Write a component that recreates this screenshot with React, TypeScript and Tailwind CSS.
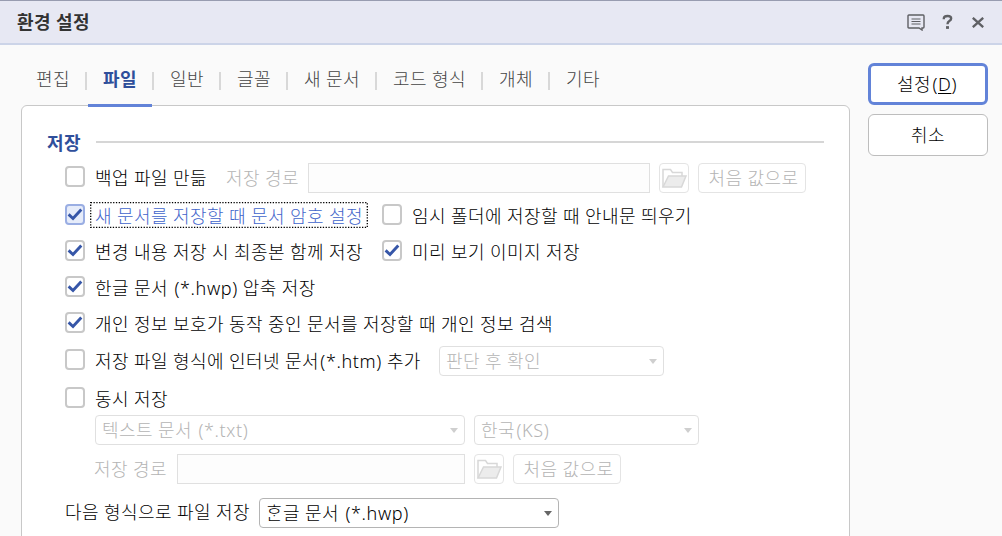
import type { ReactNode } from 'react';
import clsx from 'clsx';

const TABS = [
  { label: '편집', width: 'w-[34px]' },
  { label: '파일', width: 'w-[34px]' },
  { label: '일반', width: 'w-[34px]' },
  { label: '글꼴', width: 'w-[34px]' },
  { label: '새 문서', width: 'w-[56px]' },
  { label: '코드 형식', width: 'w-[73px]' },
  { label: '개체', width: 'w-[34px]' },
  { label: '기타', width: 'w-[34px]' },
];

const ACTIVE_TAB = '파일';

function TitleBar() {
  return (
    <header className="flex h-[45px] items-center justify-between border-t border-b-2 border-t-[#989cb0] border-b-[#ccd4e8] bg-[#e7e8f3] pr-[18px] pl-[17px]">
      <h1 className="pb-px font-bold text-[#333]">환경 설정</h1>
      <div className="flex items-center text-[#5f6064]">
        <svg width="18" height="17" viewBox="0 0 18 17" fill="none" stroke="currentColor">
          <path d="M1.9 1h14.2q.9 0 .9.9v11.2q0 .9-.9.9H15v2l-3-2H1.9q-.9 0-.9-.9V1.9q0-.9.9-.9z" strokeWidth="1.4" />
          <path d="M4.5 5h9M4.500 7.500h9M4.500 10h9" strokeWidth="1.200" />
        </svg>
        <svg className="ml-[17px]" width="11" height="16" viewBox="0 0 12 16" fill="none" stroke="currentColor">
          <path d="M2 5V4q0-2.500 4-2.500T10 4.200q0 1.500-2 2.700T6 10.500" strokeWidth="2.600" />
          <path d="M6 12.500v3" strokeWidth="3.200" />
        </svg>
        <svg className="ml-[19px]" width="12" height="11" viewBox="0 0 12 11" fill="none" stroke="currentColor">
          <path d="M.8.8l10.400 9.400M11.200.8L.8 10.200" strokeWidth="2.300" />
        </svg>
      </div>
    </header>
  );
}

function TabBar() {
  return (
    <nav className="flex h-[60px] items-center pt-[8px] pl-[15px]">
      {TABS.map((tab, i) => {
        const active = tab.label === ACTIVE_TAB;
        return (
          <div key={tab.label} className="flex h-full items-center">
            {i > 0 && <span className="mt-[4px] h-[18px] w-[2px] bg-[#d8d8d8]" />}
            <button className={clsx('relative h-full pr-[15px]', i > 0 && 'pl-[16px]', active ? 'font-bold text-[#2f4f9b]' : 'text-[#444]')}>
              <span className={clsx('block whitespace-nowrap', tab.width)}>{tab.label}</span>
              {active && <span className="absolute right-0 bottom-[-2px] left-[1px] z-10 h-[3px] bg-[#6283d8]" />}
            </button>
          </div>
        );
      })}
    </nav>
  );
}

// Latin parts in parentheses are set a little wider than the Hangul
function Ext({ children }: { children: ReactNode }) {
  return <span className="ml-[1.5px] tracking-[0.6px]">{children}</span>;
}

function Checkbox({ checked, focused, children }: { checked?: boolean; focused?: boolean; children: ReactNode }) {
  return (
    <label className="flex items-center">
      <span
        className={clsx(
          'flex h-[21px] w-5 shrink-0 items-center justify-center rounded-[4px] border-2',
          focused ? 'border-[#9aaee3] bg-[#e6ecfa]' : 'border-[#c8c8c8] bg-white',
        )}
      >
        {checked && (
          <svg className="shrink-0" width="16" height="15" viewBox="0 0 16 15" fill="none" stroke="#3656a8">
            <path d="M1.600 7.400L6 11.500L14.300 2.400" strokeWidth="2.900" />
          </svg>
        )}
      </span>
      <span
        className={clsx(
          'relative ml-[5px] h-[27px] pt-[2px] pl-[5px] leading-[26px] whitespace-nowrap',
          focused && 'w-[278px] text-[#3f65cb]',
        )}
      >
        {focused && (
          <svg className="absolute top-[1px] left-0" width="278" height="26" fill="none" stroke="#000">
            <rect x=".7" y=".7" width="276.600" height="24.600" strokeWidth="1.300" strokeDasharray="1.300 1.500" />
          </svg>
        )}
        {children}
      </span>
    </label>
  );
}

function PathField({ width }: { width: string }) {
  return (
    <>
      <div className={clsx('h-[30px] shrink-0 border border-[#e0e0e0] bg-[#fdfdfd]', width)} />
      <button className="ml-[9px] flex h-[30px] w-[30px] shrink-0 items-center justify-center rounded-[4px] border border-[#e4e4e4]">
        <svg width="26" height="22" viewBox="0 0 26 22" stroke="#d8d8d8" strokeWidth="1.500">
          <path d="M2 20V2.500h7.500l2 3H21V9" fill="#fff" />
          <path d="M2 20L7.500 9H25l-4.500 11z" fill="#ececec" />
        </svg>
      </button>
      <button className="ml-[9px] h-[30px] w-[108px] shrink-0 rounded-[4px] border border-[#e4e4e4] pl-[3px] whitespace-nowrap text-[#b4b4b4]">
        처음 값으로
      </button>
    </>
  );
}

function Select({ width, disabled, children }: { width: string; disabled?: boolean; children: ReactNode }) {
  return (
    <div
      className={clsx(
        'flex h-[30px] shrink-0 items-center justify-between rounded-[4px] border bg-white pr-[6px] pl-[6px] whitespace-nowrap',
        width,
        disabled ? 'border-[#e0e0e0] text-[#b4b4b4]' : 'border-[#b4b4b4] text-black',
      )}
    >
      <span>{children}</span>
      <svg className={disabled ? 'text-[#cfcfcf]' : 'text-[#666]'} width="8" height="5" viewBox="0 0 8 5" fill="currentColor">
        <path d="M0 0h8L4 5z" />
      </svg>
    </div>
  );
}

function SaveSettings() {
  return (
    <section className="h-[460px] w-[829px] rounded-[6px] border border-[#c8c8c8] bg-white pt-[24px] pl-[25px]">
      <div className="flex h-[26px] items-center">
        <h2 className="w-[49px] font-bold text-[#2f4f9b]">저장</h2>
        <div className="mb-[2px] h-[2px] w-[728px] bg-[#d6d6d6]" />
      </div>

      <div className="pl-[18px]">
        <div className="mt-[7px] flex h-[30px] items-center">
          <div className="pb-[3px]">
            <Checkbox>백업 파일 만듦</Checkbox>
          </div>
          <span className="ml-auto pr-[9px] pb-px text-[#b4b4b4]">저장 경로</span>
          <div className="mr-[43px] flex">
            <PathField width="w-[342px]" />
          </div>
        </div>
        <div className="mt-[8px] grid h-[27px] grid-cols-[317px_1fr] items-center">
          <Checkbox checked focused>
            새 문서를 저장할 때 문서 암호 설정
          </Checkbox>
          <Checkbox>임시 폴더에 저장할 때 안내문 띄우기</Checkbox>
        </div>
        <div className="mt-[9px] grid h-[27px] grid-cols-[317px_1fr] items-center">
          <Checkbox checked>변경 내용 저장 시 최종본 함께 저장</Checkbox>
          <Checkbox checked>미리 보기 이미지 저장</Checkbox>
        </div>
        <div className="mt-[9px] flex h-[27px] items-center">
          <Checkbox checked>
            한글 문서 <Ext>(*.hwp)</Ext> 압축 저장
          </Checkbox>
        </div>
        <div className="mt-[9px] flex h-[27px] items-center">
          <Checkbox checked>개인 정보 보호가 동작 중인 문서를 저장할 때 개인 정보 검색</Checkbox>
        </div>
        <div className="mt-[10px] grid h-[30px] grid-cols-[374px_1fr] items-center">
          <div className="pb-[3px]">
            <Checkbox>
              저장 파일 형식에 인터넷 문서<Ext>(*.htm)</Ext> 추가
            </Checkbox>
          </div>
          <Select width="w-[225px]" disabled>
            판단 후 확인
          </Select>
        </div>
        <div className="mt-[8px] flex h-[27px] items-center">
          <Checkbox>동시 저장</Checkbox>
        </div>
        <div className="mt-[4px] flex gap-[9px] pl-[30px]">
          <Select width="w-[370px]" disabled>
            텍스트 문서 <Ext>(*.txt)</Ext>
          </Select>
          <Select width="w-[225px]" disabled>
            한국<Ext>(KS)</Ext>
          </Select>
        </div>
        <div className="mt-[9px] flex items-center pl-[29px]">
          <span className="w-[83px] text-[#b4b4b4]">저장 경로</span>
          <PathField width="w-[288px]" />
        </div>
        <div className="mt-[14px] flex items-center">
          <span className="w-[194px] pb-[2px] whitespace-nowrap">다음 형식으로 파일 저장</span>
          <Select width="w-[300px]">
            ᄒᆞᆫ글 문서 <Ext>(*.hwp)</Ext>
          </Select>
        </div>
      </div>
    </section>
  );
}

export default function App() {
  return (
    <div className="h-[536px] w-[1002px] overflow-hidden bg-[#fafafa] font-['Noto_Sans','Noto_Sans_CJK_KR',sans-serif] text-[18px] leading-[24px] font-light tracking-[0.4px] text-black">
      <TitleBar />
      <div className="flex pr-[14px] pl-[21px]">
        <main className="w-[829px]">
          <TabBar />
          <SaveSettings />
        </main>
        <aside className="ml-[18px] flex w-[120px] flex-col gap-[9px] pt-[18px]">
          <button className="h-[42px] rounded-[6px] border-[3px] border-[#6283d8] bg-white pr-[2px]">
            설정
            <Ext>
              (<span className="underline underline-offset-2">D</span>)
            </Ext>
          </button>
          <button className="h-[42px] rounded-[6px] border border-[#bdbdbd] bg-white">취소</button>
        </aside>
      </div>
    </div>
  );
}
